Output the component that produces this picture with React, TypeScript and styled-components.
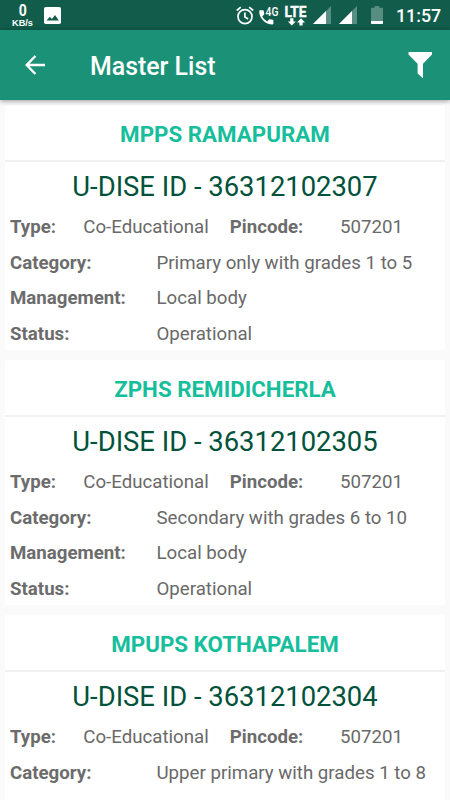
import React from 'react';
import styled, { createGlobalStyle } from 'styled-components';

const GlobalStyle = createGlobalStyle`
  *, *::before, *::after { box-sizing: border-box; }
  html, body { margin: 0; height: 100%; overflow: hidden; background: #fafafa; }
  body { font-family: Roboto, "Liberation Sans", sans-serif; }
`;

const Screen = styled.div`
  display: flex;
  flex-direction: column;
  width: 450px;
  height: 800px;
  overflow: hidden;
  background: #fafafa;
`;

const StatusBar = styled.header`
  display: flex;
  flex: none;
  align-items: center;
  height: 30px;
  padding: 0 11px 0 11px;
  color: #fff;
  background: #115c4b;

  svg { flex: none; display: block; }
`;

const NetSpeed = styled.div`
  display: flex;
  flex-direction: column;
  align-items: center;
  width: 23px;
  margin-right: 10px;
  font-weight: 700;
`;

const SpeedValue = styled.span`
  font-size: 16.5px;
  line-height: 14px;
  margin-top: 1px;
  transform: scaleX(0.85);
`;

const SpeedUnit = styled.span`
  font: 700 9.2px/10px "Liberation Sans", sans-serif;
`;

const Spacer = styled.div`
  flex: 1;
`;

const StatusIcons = styled.div`
  display: flex;
  align-items: center;
`;

const StatusIcon = styled.svg<{ $after: number }>`
  margin-right: ${(p) => p.$after}px;
`;

const Clock = styled.time`
  width: 43px;
  font-size: 17.8px;
  font-weight: 500;
  line-height: 30px;
  white-space: nowrap;
  margin-top: 2px;
`;

const AppBar = styled.div`
  display: flex;
  flex: none;
  align-items: center;
  height: 70px;
  padding: 0 17px 0 22px;
  color: #fff;
  background: #1b9278;
  box-shadow: 0 1px 5px rgba(0, 0, 0, 0.4);
  z-index: 1;
`;

const IconButton = styled.button`
  display: flex;
  padding: 0;
  border: 0;
  color: inherit;
  background: none;
`;

const Heading = styled.h1`
  flex: 1;
  margin: 3px 0 0 42px;
  font-size: 24.9px;
  font-weight: 500;
  line-height: 30px;
`;

const List = styled.main`
  display: flex;
  flex-direction: column;
  gap: 10px;
  padding: 5px 5px 0;
`;

const Card = styled.article`
  flex: none;
  height: 245px;
  border-radius: 2px;
  background: #fff;
`;

const SchoolName = styled.h2`
  height: 57px;
  margin: 0;
  padding-top: 1px;
  border-bottom: 2px solid #f1f1f1;
  color: #16be9b;
  font-size: 22.35px;
  font-weight: 700;
  line-height: 56px;
  text-align: center;
`;

const SchoolId = styled.p`
  height: 47px;
  margin: 0;
  color: #00523a;
  font-size: 27.4px;
  line-height: 51px;
  text-align: center;
`;

const Details = styled.div`
  display: grid;
  grid-template-rows: 36px 35px 36px 35px;
  padding-left: 5px;
  color: #696969;
  font-size: 18.68px;
  line-height: 36px;
  white-space: nowrap;
`;

const Row = styled.div<{ $columns: string }>`
  display: grid;
  grid-template-columns: ${(p) => p.$columns};
`;

const Label = styled.span`
  color: #6c6c6c;
  font-weight: 700;
`;

const Value = styled.span``;

const schools = [
  { name: 'MPPS RAMAPURAM', id: '36312102307', category: 'Primary only with grades 1 to 5' },
  { name: 'ZPHS REMIDICHERLA', id: '36312102305', category: 'Secondary with grades 6 to 10' },
  { name: 'MPUPS KOTHAPALEM', id: '36312102304', category: 'Upper primary with grades 1 to 8' },
];

const Signal = ({ after }: { after: number }) => (
  <StatusIcon $after={after} width="18" height="18" viewBox="0 0 18 18">
    <path d="M18 0V18H0Z" fill="#588d81" />
    <path d="M13 5V18H0Z" fill="#fff" />
  </StatusIcon>
);

export default function App() {
  return (
    <Screen>
      <GlobalStyle />
      <StatusBar>
        <NetSpeed>
          <SpeedValue>0</SpeedValue>
          <SpeedUnit>KB/s</SpeedUnit>
        </NetSpeed>
        <svg width="17" height="17" viewBox="0 0 17 17">
          <rect width="17" height="17" rx="1.8" fill="#fff" />
          <path d="M2.5 13.5 5.8 9.7 8 12 11 8 14.8 13.5Z" fill="#115c4b" />
        </svg>
        <Spacer />
        <StatusIcons>
          <StatusIcon $after={4} width="18" height="19" viewBox="0 0 18 19" fill="none" stroke="#fff" strokeWidth="1.7">
            <circle cx="9" cy="10.6" r="7" />
            <path d="M8.9 6.5V11l3.3 2M.8 4.5 4.8 1.2M17.2 4.5l-4-3.3" />
          </StatusIcon>
          <StatusIcon $after={5} width="21" height="20" viewBox="0 0 21 20" fill="#fff">
            <path d="M2 5.200H5c.5 0 .8.3.8.8 0 1 .2 1.900.5 2.800.1.3 0 .6-.2.8L4.200 11.400a12 12 0 0 0 5 5l1.800-1.900c.2-.2.5-.3.8-.2.9.3 1.800.5 2.800.5.5 0 .8.4.8.8v3c0 .5-.3.8-.8.8A13.400 13.400 0 0 1 1.200 6c0-.5.3-.8.8-.8Z" />
            <text x="7.6" y="11.4" fontFamily="Roboto, sans-serif" fontSize="12" fontWeight="500" textLength="12.8" lengthAdjust="spacingAndGlyphs">4G</text>
          </StatusIcon>
          <StatusIcon $after={6} width="23" height="22" viewBox="0 0 23 22" fill="#fff">
            <text x="0.5" y="13" fontFamily="Roboto, sans-serif" fontSize="14.5" fontWeight="700" stroke="#fff" strokeWidth=".4" textLength="22" lengthAdjust="spacingAndGlyphs">LTE</text>
            <path d="M6.2 14.2h3.2v3.2h2.4L7.8 21.6 3.8 17.4h2.4ZM15.4 21.6h3.2v-3.2H21L17 14.2l-4 4.2h2.4Z" />
          </StatusIcon>
          <Signal after={8} />
          <Signal after={14} />
          <StatusIcon $after={13} width="12" height="18" viewBox="0 0 12 18">
            <path d="M3.6 0h4.8v1.8H12V15H0V1.8H3.6Z" fill="#588d81" />
            <path d="M0 15H12v2.2q0 .8-.8.8H.8Q0 18 0 17.2Z" fill="#fff" />
          </StatusIcon>
        </StatusIcons>
        <Clock>11:57</Clock>
      </StatusBar>
      <AppBar>
        <IconButton aria-label="Back">
          <svg width="26" height="26" viewBox="0 0 26 26" fill="none" stroke="#fff" strokeWidth="2.4">
            <path d="M23 13H5M13.4 4 4.7 13l8.7 9" />
          </svg>
        </IconButton>
        <Heading>Master List</Heading>
        <IconButton aria-label="Filter">
          <svg width="25" height="28" viewBox="0 0 25 28">
            <path d="M.5 1H24V3.5L15 12.7V27.3L9.6 22.6V12.7L.5 3.5Z" fill="#fff" />
          </svg>
        </IconButton>
      </AppBar>
      <List>
        {schools.map((school) => (
          <Card key={school.id}>
            <SchoolName>{school.name}</SchoolName>
            <SchoolId>U-DISE ID - {school.id}</SchoolId>
            <Details>
              <Row $columns="73.3px 146.5px 110.2px 1fr">
                <Label>Type:</Label>
                <Value>Co-Educational</Value>
                <Label>Pincode:</Label>
                <Value>507201</Value>
              </Row>
              <Row $columns="146.5px 1fr">
                <Label>Category:</Label>
                <Value>{school.category}</Value>
              </Row>
              <Row $columns="146.5px 1fr">
                <Label>Management:</Label>
                <Value>Local body</Value>
              </Row>
              <Row $columns="146.5px 1fr">
                <Label>Status:</Label>
                <Value>Operational</Value>
              </Row>
            </Details>
          </Card>
        ))}
      </List>
    </Screen>
  );
}
